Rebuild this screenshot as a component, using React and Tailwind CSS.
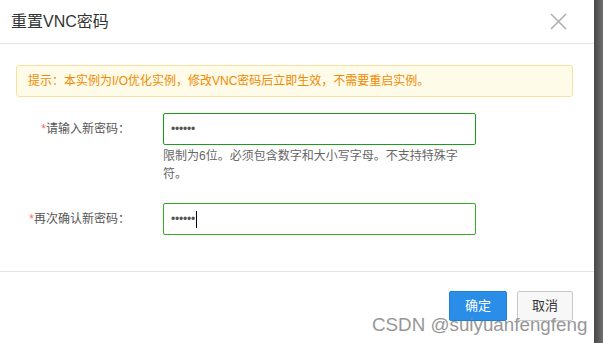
import React from 'react'

const font = { fontFamily: '"Liberation Sans", "Noto Sans CJK SC", sans-serif' }

function Field({ label, caret, border, help }) {
    return (
        <div className="flex">
            <div className="w-[114px] h-[32px] flex items-center justify-end text-[12px] text-[#555]">
                <span className="text-[#f56c6c]">*</span>
                <span>{label}</span>
            </div>
            <div className="ml-[33px] w-[313px]">
                <div className={`h-[32px] rounded-[2px] border ${border} flex items-center pl-[7px] text-[12px] text-[#555]`}>
                    <span className="tracking-[-0.2px]">••••••</span>
                    {caret && <span className="ml-[1px] w-[1px] h-[17px] bg-black" />}
                </div>
                {help && (
                    <p className="mt-[2px] w-[298px] text-[12px] leading-[18px] text-[#666]">
                        限制为6位。必须包含数字和大小写字母。不支持特殊字符。
                    </p>
                )}
            </div>
        </div>
    )
}

export default function App() {
    return (
        <div className="flex w-[603px] h-[343px] bg-white overflow-hidden" style={font}>
            <div className="relative flex-1 flex flex-col">
                <div className="h-[44px] border-b border-[#e5e5e5] flex items-center justify-between pl-[11px] pr-[27px]">
                    <h1 className="text-[16px] text-[#333]">重置VNC密码</h1>
                    <svg width="17" height="17" viewBox="0 0 17 17" className="mt-[-1px]">
                        <path d="M1 1 L16 16 M16 1 L1 16" stroke="#b0b0b0" strokeWidth="1.6" fill="none" />
                    </svg>
                </div>

                <div className="pl-4 pr-[21px] pt-[21px]">
                    <div className="h-[32px] rounded-[3px] border border-[#fae0a0] bg-[#fffbe9] flex items-center pl-[11px] text-[12px] text-[#f08a00]">
                        提示：本实例为I/O优化实例，修改VNC密码后立即生效，不需要重启实例。
                    </div>

                    <div className="mt-[16px] flex flex-col gap-[20px]">
                        <Field label="请输入新密码：" border="border-[#1f9a1f]" help />
                        <Field label="再次确认新密码：" border="border-[#36ac24]" caret />
                    </div>
                </div>

                <div className="mt-[36px] border-t border-[#e5e5e5] pl-4 pr-[21px] pt-[19px] flex justify-end gap-[10px]">
                    <button className="w-[58px] h-[30px] rounded-[2px] border border-[#1f80d8] bg-[#2a8de8] text-white text-[13px]">
                        确定
                    </button>
                    <button className="w-[56px] h-[30px] rounded-[2px] border border-[#c8c8c8] bg-[#f7f7f7] text-[#333] text-[13px]">
                        取消
                    </button>
                </div>

                <div className="absolute left-[372px] top-[311px] text-[18.8px] text-[#8c8c8c] opacity-90 whitespace-nowrap">
                    CSDN @suiyuanfengfeng
                </div>
            </div>
            <div className="w-[9px] bg-gradient-to-r from-[#484848] to-[#6e6e6e]" />
        </div>
    )
}
